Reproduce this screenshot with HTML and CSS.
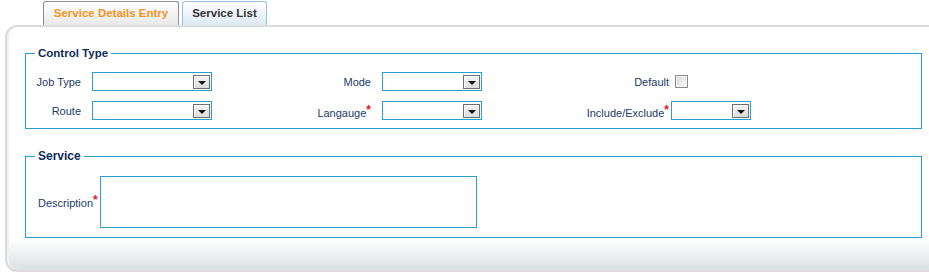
FILE: index.html
```html
<!DOCTYPE html>
<html lang="en">
<head>
  <meta charset="UTF-8" />
  <meta name="viewport" content="width=device-width, initial-scale=1.0" />
  <title>Service Details Entry</title>
  <link rel="stylesheet" href="styles.css">
</head>
<body>
  <div class="tabs">
    <a href="#" class="tab tab-active">Service Details Entry</a>
    <a href="#" class="tab tab-list">Service List</a>
  </div>

  <div class="panel">
    <fieldset class="group">
      <legend>Control Type</legend>
      <div class="control-grid">
        <label class="lbl c1">Job Type</label>
        <div class="c2"><div class="combo combo-lg"><span class="combo-btn"></span></div></div>
        <label class="lbl c3">Mode</label>
        <div class="c4"><div class="combo combo-md"><span class="combo-btn"></span></div></div>
        <label class="lbl c5">Default</label>
        <div class="c6"><span class="check"></span></div>

        <label class="lbl c1">Route</label>
        <div class="c2"><div class="combo combo-lg"><span class="combo-btn"></span></div></div>
        <label class="lbl c3">Langauge<span class="req">*</span></label>
        <div class="c4"><div class="combo combo-md"><span class="combo-btn"></span></div></div>
        <label class="lbl c5">Include/Exclude<span class="req">*</span></label>
        <div class="c6"><div class="combo combo-sm"><span class="combo-btn"></span></div></div>
      </div>
    </fieldset>

    <fieldset class="group group-service">
      <legend>Service</legend>
      <div class="service-row">
        <label class="lbl desc-lbl">Description<span class="req">*</span></label>
        <textarea class="desc"></textarea>
      </div>
    </fieldset>
  </div>
</body>
</html>
```

FILE: styles.css
```css
html, body {
  overflow: hidden;
}
body {
  font-family: "Liberation Sans", Arial, sans-serif;
  margin: 0;
  padding: 0;
  background-color: #fff;
}
.tabs {
  display: flex;
  align-items: flex-end;
  height: 25px;
  padding-left: 43px;
  gap: 3px;
}
.tab {
  box-sizing: border-box;
  height: 24px;
  line-height: 23px;
  text-align: center;
  font-size: 11.5px;
  font-weight: bold;
  text-decoration: none;
  border: 1px solid #8e8e8e;
  border-bottom: none;
  border-radius: 3px 3px 0 0;
}
.tab-active {
  width: 136px;
  color: #f39325;
  background: linear-gradient(#ffffff, #e9e9e9);
}
.tab-list {
  width: 85px;
  color: #333;
  border-color: #92c2e2;
  background: linear-gradient(#ffffff, #dde9f5);
}
.panel {
  box-sizing: border-box;
  width: 937px;
  height: 247px;
  margin-left: 5px;
  border: 2px solid #dcdcdc;
  border-radius: 12px;
  box-shadow: inset 2px 0 0 #f1f1f1;
  background: linear-gradient(#ffffff 0, #ffffff 212px, #dbe0e3 100%);
  padding: 19px 18px 0 18px;
}
.group {
  margin: 0;
  padding: 7px 0 3px 0;
  border: 1px solid #2a9dd3;
  min-width: 0;
}
.group legend {
  margin-left: 9px;
  padding: 0 3px;
  font-size: 11.5px;
  font-weight: bold;
  line-height: 14px;
  color: #0e2c5c;
}
.group-service {
  margin-top: 20px;
  padding: 13px 0 9px 0;
}
.group-service legend {
  font-size: 12px;
}
.control-grid {
  display: grid;
  grid-template-columns: 61px 223px 66px 204px 91px 1fr;
  grid-auto-rows: 29px;
  align-items: center;
}
.lbl {
  font-size: 11px;
  color: #1c3b6b;
  white-space: nowrap;
}
.c1 {
  text-align: right;
  padding-right: 6px;
}
.c3 {
  text-align: right;
  padding-right: 5px;
}
.c5 {
  text-align: right;
  padding-right: 2px;
}
.c2 .combo {
  margin-left: 5px;
}
.c4 .combo {
  margin-left: 6px;
}
.req {
  color: #e3141b;
  font-size: 12px;
  font-weight: bold;
  vertical-align: 3px;
}
.combo {
  box-sizing: border-box;
  height: 19px;
  border: 1px solid #2a9dd3;
  background-color: #fff;
  display: flex;
  justify-content: flex-end;
  align-items: center;
  padding-right: 1px;
}
.combo-lg {
  width: 120px;
}
.combo-md {
  width: 100px;
}
.combo-sm {
  width: 80px;
}
.combo-btn {
  box-sizing: border-box;
  width: 17px;
  height: 14px;
  border: 1px solid #6f6f6f;
  box-shadow: inset 1px 1px 0 #fff;
  background: linear-gradient(#f4f4f4, #dcdcdc);
  display: flex;
  justify-content: center;
  align-items: center;
  padding-top: 3px;
}
.combo-btn::after {
  content: "";
  width: 0;
  height: 0;
  border-left: 4px solid transparent;
  border-right: 4px solid transparent;
  border-top: 4px solid #111;
}
.check {
  display: block;
  box-sizing: border-box;
  width: 13px;
  height: 13px;
  margin-left: 4px;
  border: 1px solid #8c8c8c;
  box-shadow: inset 0 0 0 1px #f4f4f4;
  background: linear-gradient(135deg, #d8d8d8, #fbfbfb);
}
.service-row {
  display: flex;
  align-items: center;
}
.desc-lbl {
  box-sizing: border-box;
  width: 74px;
  padding-left: 12px;
  margin-bottom: 3px;
}
.desc {
  box-sizing: border-box;
  width: 377px;
  height: 52px;
  margin: 0;
  border: 1px solid #2a9dd3;
  resize: none;
  outline: none;
}
```
